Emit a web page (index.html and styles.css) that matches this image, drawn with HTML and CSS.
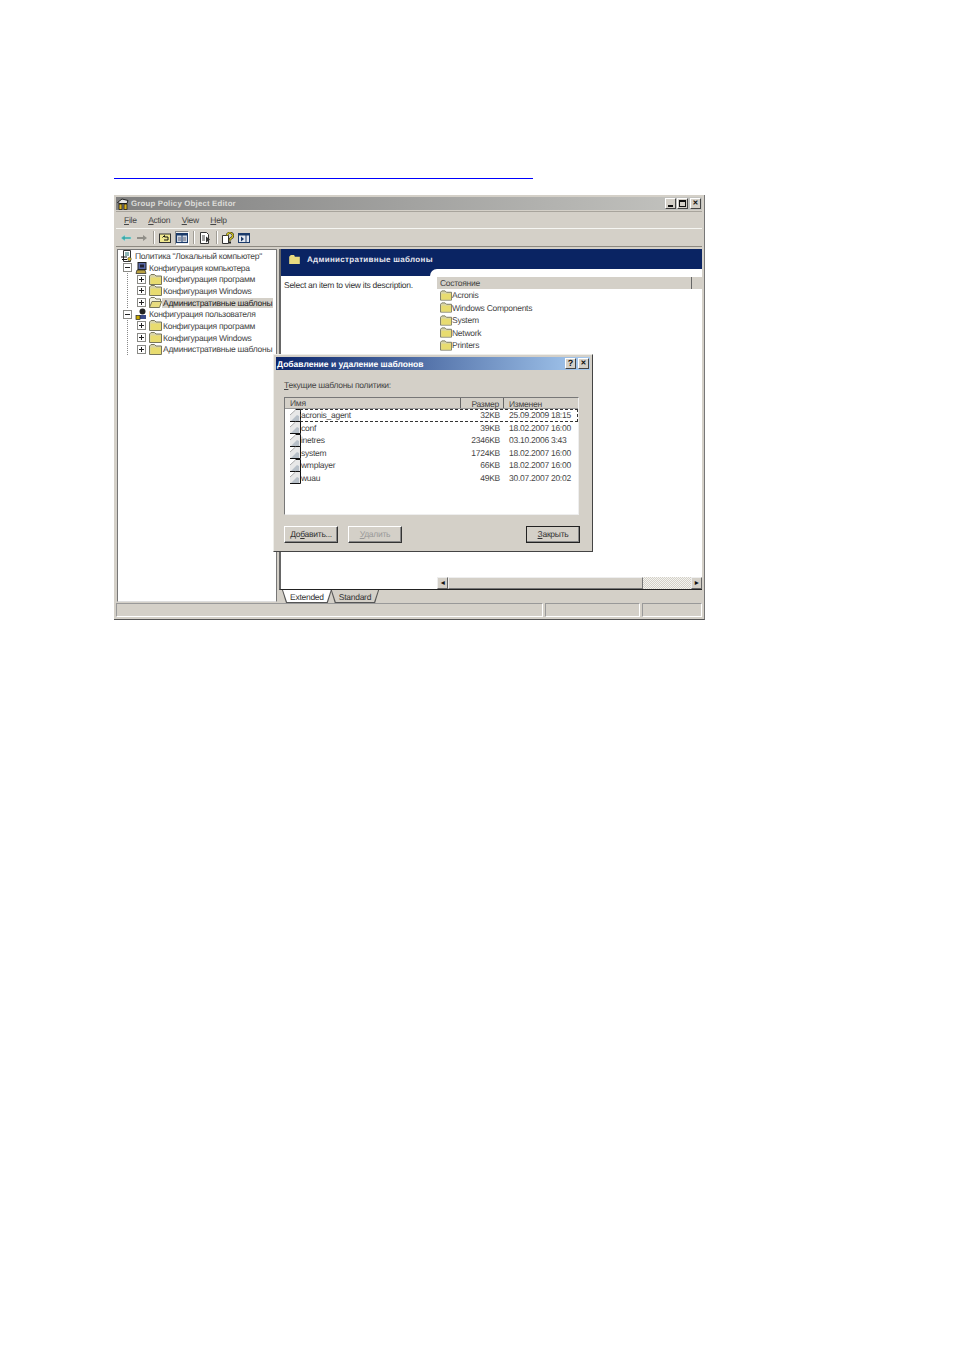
FILE: index.html
```html
<!DOCTYPE html>
<html lang="ru">
<head>
<meta charset="utf-8">
<title>Group Policy Object Editor</title>
<link rel="stylesheet" href="styles.css">
</head>
<body>
<svg class="defs" width="0" height="0" aria-hidden="true">
  <defs>
    <symbol id="folder" viewBox="0 0 13 11">
      <path d="M.5 10.500V2L2 .5h3.500L7 2h5.500v8.500z" fill="#d8d4a8" stroke="#77765c"/>
      <path d="M1.500 3.500h10.500v6.500H1.500z" fill="#e8dc70"/>
    </symbol>
    <symbol id="folder-open" viewBox="0 0 13 11">
      <path d="M.5 10.500V2L2 .5h3.500L7 2h4.500v2" fill="#f2f0dc" stroke="#77765c"/>
      <path d="M.5 10.500L3 4.500h9.500l-2 6z" fill="#e8dc80" stroke="#77765c"/>
    </symbol>
    <symbol id="plus" viewBox="0 0 9 9">
      <rect x=".5" y=".5" width="8" height="8" fill="#fff" stroke="#8a8a86"/>
      <path d="M2 4.500h5M4.500 2v5" stroke="#222"/>
    </symbol>
    <symbol id="minus" viewBox="0 0 9 9">
      <rect x=".5" y=".5" width="8" height="8" fill="#fff" stroke="#8a8a86"/>
      <path d="M2 4.500h5" stroke="#222"/>
    </symbol>
    <symbol id="doc" viewBox="0 0 11 13">
      <path d="M0 13V6L5.500 1H10v12z" fill="#e8e8e8"/>
      <path d="M1 12l6-6 2 1v5z" fill="#b8c0c8"/>
      <path d="M5.500.5h5v12H0" fill="none" stroke="#111"/>
      <path d="M0 6l5.500-5" stroke="#aaa" fill="none"/>
    </symbol>
  </defs>
</svg>

<a class="link-line" href="#" aria-label="link"></a>

<div class="window">
  <div class="titlebar">
    <svg class="app-icon" viewBox="0 0 12 12"><path d="M.5 4.500L5 1l6 1.500-1 3H3z" fill="#e8e8e8" stroke="#222"/><rect x="2" y="6" width="3" height="5.500" fill="#d8b020" stroke="#111" stroke-width=".7"/><rect x="7" y="6" width="3" height="5.500" fill="#d8b020" stroke="#111" stroke-width=".7"/></svg>
    <span class="title-text">Group Policy Object Editor</span>
    <div class="win-btns">
      <span class="win-btn"><i class="g-min"></i></span>
      <span class="win-btn"><i class="g-max"></i></span>
      <span class="win-btn g-x">✕</span>
    </div>
  </div>

  <div class="menubar">
    <span><u>F</u>ile</span><span><u>A</u>ction</span><span><u>V</u>iew</span><span><u>H</u>elp</span>
  </div>

  <div class="toolbar">
    <svg class="tb" viewBox="0 0 12 12"><path d="M1 6l4-3V5h6v2H5v2z" fill="#3aa8a8" stroke="#a8e0e0" stroke-width=".5"/></svg>
    <svg class="tb" viewBox="0 0 12 12"><path d="M11 6L7 3v2H1v2h6v2z" fill="#908e88"/></svg>
    <i class="tb-sep"></i>
    <svg class="tb" viewBox="0 0 12 12"><rect x=".5" y="2" width="11" height="8.500" fill="#f0e890" stroke="#333"/><path d="M3.500 5.500L5.500 3.500V5H9v3H5" fill="none" stroke="#111"/></svg>
    <span class="tb-on"><svg class="tb" viewBox="0 0 12 12"><rect x=".5" y="1.500" width="11" height="9" fill="#cdd6e4" stroke="#1a3a6a"/><rect x="1" y="2" width="10" height="1.500" fill="#1a3a6a"/><path d="M6 3v7" stroke="#1a3a6a"/><path d="M2 6h3M7 6h3M2 8h3M7 8h3" stroke="#667"/></svg></span>
    <i class="tb-sep"></i>
    <svg class="tb" viewBox="0 0 12 12"><path d="M1.500.5h6l2 2v9h-8z" fill="#fff" stroke="#333"/><path d="M3 4h3M3 6h3M3 8h3" stroke="#444"/><path d="M7 4.500l4 3-4 3z" fill="#333"/></svg>
    <i class="tb-sep"></i>
    <svg class="tb" viewBox="0 0 12 12"><path d="M.5 3.500h6v8h-6z" fill="#fff" stroke="#333"/><path d="M5 3.500a3 2.800 0 1 1 4.500 2.500L8 7v1.500" fill="none" stroke="#111" stroke-width="2.200"/><path d="M5 3.500a3 2.800 0 1 1 4.500 2.500L8 7v1.500" fill="none" stroke="#e8d820" stroke-width="1.200"/><rect x="7" y="9.500" width="2" height="2" fill="#222"/></svg>
    <svg class="tb" viewBox="0 0 12 12"><rect x=".5" y="1.500" width="11" height="9" fill="#e4e8f0" stroke="#1a3a6a"/><rect x="1" y="2" width="10" height="1.500" fill="#1a3a6a"/><path d="M8 3v7" stroke="#1a3a6a"/><path d="M3 4.500l3 2.500-3 2.500z" fill="#1a3a6a"/></svg>
  </div>

  <div class="panes">
    <div class="tree">
      <div class="node n0"><svg class="ni" viewBox="0 0 12 12"><path d="M2.500.5h7v11h-7z" fill="#fff" stroke="#333"/><path d="M4 3h4M4 5h4" stroke="#1a6a6a"/><path d="M0 7h6M1 9.500h5" stroke="#111"/><circle cx="8.500" cy="9" r="1.800" fill="#d8b820" stroke="#333" stroke-width=".5"/></svg><span>Политика "Локальный компьютер"</span></div>
      <div class="node n1"><svg class="box"><use href="#minus"/></svg><svg class="ni" viewBox="0 0 12 12"><rect x="3" y=".5" width="8" height="7" fill="#5868a8" stroke="#222"/><rect x="5" y="2.500" width="4" height="3" fill="#223"/><path d="M1 11.500l1-3.500h8l1 3.500z" fill="#b8a040" stroke="#222" stroke-width=".7"/></svg><span>Конфигурация компьютера</span></div>
      <div class="node n2"><svg class="box"><use href="#plus"/></svg><svg class="fi"><use href="#folder"/></svg><span>Конфигурация программ</span></div>
      <div class="node n2"><svg class="box"><use href="#plus"/></svg><svg class="fi"><use href="#folder"/></svg><span>Конфигурация Windows</span></div>
      <div class="node n2"><svg class="box"><use href="#plus"/></svg><svg class="fi"><use href="#folder-open"/></svg><span class="sel">Административные шаблоны</span></div>
      <div class="node n1"><svg class="box"><use href="#minus"/></svg><svg class="ni" viewBox="0 0 12 12"><circle cx="7.500" cy="3.500" r="3" fill="#222"/><path d="M3 11l2-4h6v4z" fill="#3a4a8a"/><rect x="1" y="7.500" width="4" height="4" fill="#c8a800" stroke="#222" stroke-width=".7"/></svg><span>Конфигурация пользователя</span></div>
      <div class="node n2"><svg class="box"><use href="#plus"/></svg><svg class="fi"><use href="#folder"/></svg><span>Конфигурация программ</span></div>
      <div class="node n2"><svg class="box"><use href="#plus"/></svg><svg class="fi"><use href="#folder"/></svg><span>Конфигурация Windows</span></div>
      <div class="node n2"><svg class="box"><use href="#plus"/></svg><svg class="fi"><use href="#folder"/></svg><span>Административные шаблоны</span></div>
    </div>

    <div class="right">
      <div class="details">
        <div class="banner">
          <svg class="fi" viewBox="0 0 13 11"><path d="M0 11V2l2-2h4l1 2h6v9z" fill="#e8da80"/></svg>
          <span>Административные шаблоны</span>
        </div>
        <div class="detail-body">
          <div class="desc">Select an item to view its description.</div>
          <div class="notch"></div>
          <div class="list-side">
            <div class="col-head"><span class="col-name">Состояние</span><span class="col-rest"></span></div>
            <div class="f-row"><svg class="fi"><use href="#folder"/></svg>Acronis</div>
            <div class="f-row"><svg class="fi"><use href="#folder"/></svg>Windows Components</div>
            <div class="f-row"><svg class="fi"><use href="#folder"/></svg>System</div>
            <div class="f-row"><svg class="fi"><use href="#folder"/></svg>Network</div>
            <div class="f-row"><svg class="fi"><use href="#folder"/></svg>Printers</div>
            <div class="hscroll">
              <span class="sb-btn">◂</span><span class="sb-thumb"></span><span class="sb-track"></span><span class="sb-btn">▸</span>
            </div>
          </div>
        </div>
      </div>
      <div class="tabs">
        <span class="tab active">Extended</span>
        <span class="tab">Standard</span>
      </div>
    </div>
  </div>

  <div class="status"><span class="s1"></span><span class="s2"></span><span class="s3"></span></div>

  <div class="dialog">
    <div class="dlg-title">
      <span>Добавление и удаление шаблонов</span>
      <div class="win-btns"><span class="win-btn g-q">?</span><span class="win-btn g-x">✕</span></div>
    </div>
    <div class="dlg-body">
      <div class="dlg-label"><u>Т</u>екущие шаблоны политики:</div>
      <div class="dlg-list">
        <div class="dl-head"><span class="c-name">Имя</span><span class="c-size">Размер</span><span class="c-date">Изменен</span></div>
        <div class="dl-row focus"><span class="c-name"><svg class="di"><use href="#doc"/></svg>acronis_agent</span><span class="c-size">32KB</span><span class="c-date">25.09.2009 18:15</span></div>
        <div class="dl-row"><span class="c-name"><svg class="di"><use href="#doc"/></svg>conf</span><span class="c-size">39KB</span><span class="c-date">18.02.2007 16:00</span></div>
        <div class="dl-row"><span class="c-name"><svg class="di"><use href="#doc"/></svg>inetres</span><span class="c-size">2346KB</span><span class="c-date">03.10.2006 3:43</span></div>
        <div class="dl-row"><span class="c-name"><svg class="di"><use href="#doc"/></svg>system</span><span class="c-size">1724KB</span><span class="c-date">18.02.2007 16:00</span></div>
        <div class="dl-row"><span class="c-name"><svg class="di"><use href="#doc"/></svg>wmplayer</span><span class="c-size">66KB</span><span class="c-date">18.02.2007 16:00</span></div>
        <div class="dl-row"><span class="c-name"><svg class="di"><use href="#doc"/></svg>wuau</span><span class="c-size">49KB</span><span class="c-date">30.07.2007 20:02</span></div>
      </div>
      <div class="dlg-btns">
        <span class="btn">До<u>б</u>авить...</span>
        <span class="btn disabled"><u>У</u>далить</span>
        <span class="btn close"><u>З</u>акрыть</span>
      </div>
    </div>
  </div>
</div>
</body>
</html>
```
FILE: styles.css
```css
* { box-sizing: border-box; }
html, body { margin: 0; background: #fff; }
body {
  height: 1350px;
  padding: 178px 0 0 114px;
  font-family: "Liberation Sans", Arial, sans-serif;
  font-size: 8.500px;
  letter-spacing: -.27px;
  text-rendering: geometricPrecision;
  color: #333;
  overflow: hidden;
}
.defs { position: absolute; }
u { text-decoration: underline; }

.link-line { display: block; width: 419px; height: 1px; background: #0000ff; margin-bottom: 16px; }

.window {
  position: relative;
  width: 591px;
  height: 425px;
  background: #d4d0c8;
  border-right: 1px solid #777;
  border-bottom: 1px solid #555;
  padding: 2px 2px 1px 2px;
  display: flex;
  flex-direction: column;
}
.titlebar {
  height: 13px;
  background: linear-gradient(90deg, #808080, #c4c4c0);
  display: flex;
  align-items: center;
  color: #dcdcd8;
  font-weight: bold;
  font-size: 7.800px;
  letter-spacing: .2px;
  padding-left: 1px;
}
.app-icon { width: 12px; height: 12px; margin-right: 2px; }
.title-text { flex: 1; }
.win-btns { display: flex; gap: 1px; margin-right: 1px; }
.win-btns .win-btn:last-child { margin-left: 1px; }
.win-btn {
  width: 11px;
  height: 11px;
  background: #d4d0c8;
  border: 1px solid;
  border-color: #fff #444 #444 #fff;
  display: flex;
  align-items: center;
  justify-content: center;
  color: #111;
  font-size: 7px;
  line-height: 1;
}
.g-min { display: block; width: 5px; height: 2px; background: #111; margin-top: 5px; margin-right: 1px; }
.g-max { display: block; width: 7px; height: 7px; border: 1px solid #111; border-top-width: 2px; }
.g-q { font-weight: bold; font-size: 9px; }

.menubar {
  height: 18px;
  margin-top: 1px;
  padding: 1px 0 0 8px;
  display: flex;
  align-items: center;
  gap: 11.500px;
  border-bottom: 1px solid #f6f6f2;
  box-shadow: 0 1px 0 #a8a49c inset;
  color: #444;
}
.toolbar {
  height: 18px;
  display: flex;
  align-items: center;
  padding-left: 4px;
  gap: 4px;
  border-bottom: 1px solid #8c8880;
}
.tb { width: 12px; height: 12px; flex: none; display: block; }
.tb-sep { width: 1px; height: 13px; background: #a09c94; box-shadow: 1px 0 0 #fff; margin: 0 1px; }
.tb-on { background: #eee; border: 1px solid; border-color: #888 #fff #fff #888; margin-right: -1px; }

.panes {
  display: flex;
  height: 353px;
  margin-top: 2px;
  gap: 2px;
}
.tree {
  width: 160px;
  margin-left: 1px;
  background: #fff;
  border: 1px solid #777;
  border-bottom-color: #ddd;
  padding: 0 0 0 3px;
}
.node {
  height: 11.700px;
  display: flex;
  align-items: center;
  white-space: nowrap;
  color: #444;
}
.n1 { padding-left: 2px; }
.n2 {
  padding-left: 16px;
  background: linear-gradient(#888 50%, transparent 0) 6px 0 / 1px 2px repeat-y;
}
.box { width: 9px; height: 9px; margin-right: 3px; flex: none; }
.ni { width: 12px; height: 12px; margin-right: 2px; flex: none; }
.fi { width: 13px; height: 11px; margin-right: 1px; flex: none; }
.sel { background: #d4d0c8; color: #222; padding: 0 1px; margin-left: -1px; }

.right { flex: 1; display: flex; flex-direction: column; min-width: 0; }
.details {
  flex: 1;
  background: #fff;
  border-left: 2px solid #666;
  border-bottom: 1px solid #222;
  display: flex;
  flex-direction: column;
  min-height: 0;
}
.banner {
  height: 20px;
  background: #0a2463;
  color: #e8e8f0;
  display: flex;
  align-items: center;
  padding-left: 8px;
  font-weight: bold;
  font-size: 8px;
  letter-spacing: .3px;
  flex: none;
}
.banner .fi { width: 11px; height: 9px; margin-right: 7px; }
.detail-body { flex: 1; display: flex; min-height: 0; }
.desc {
  width: 149px;
  flex: none;
  border-top: 7px solid #0a2463;
  padding: 4px 0 0 3px;
  color: #333;
  white-space: nowrap;
}
.notch { width: 7px; height: 7px; flex: none; background: #0a2463; position: relative; }
.notch::after { content: ""; position: absolute; inset: 0; background: #fff; border-top-left-radius: 7px; }
.list-side { flex: 1; display: flex; flex-direction: column; padding-top: 8px; min-width: 0; }
.col-head { height: 12px; display: flex; flex: none; background: #d4d0c8; color: #444; line-height: 12px; }
.col-name { width: 255px; padding-left: 3px; border-right: 1px solid #666; }
.col-rest { flex: 1; }
.f-row { height: 12.500px; display: flex; align-items: center; padding-left: 3px; white-space: nowrap; color: #444; flex: none; }
.f-row .fi { margin-right: 0; width: 12px; }
.hscroll { margin-top: auto; height: 12px; display: flex; flex: none; }
.sb-btn {
  width: 11px;
  background: #d4d0c8;
  border: 1px solid;
  border-color: #eee #666 #666 #eee;
  display: flex;
  align-items: center;
  justify-content: center;
  font-size: 8px;
  line-height: 1;
  color: #111;
}
.sb-thumb { width: 195px; background: #d4d0c8; border: 1px solid; border-color: #eee #777 #777 #eee; }
.sb-track { flex: 1; background: repeating-conic-gradient(#d4d0c8 0 25%, #f4f4f0 0 50%) 0 0 / 2px 2px; }

.tabs { height: 12px; display: flex; flex: none; padding-left: 3px; }
.tab {
  height: 13px;
  padding: 0 8px;
  line-height: 14px;
  color: #333;
  clip-path: polygon(0 0, 100% 0, calc(100% - 4px) 100%, 4px 100%);
  background: #555;
  position: relative;
  z-index: 0;
}
.tab::before {
  content: "";
  position: absolute;
  inset: 0 1px 1px 1px;
  clip-path: polygon(0 0, 100% 0, calc(100% - 4px) 100%, 4px 100%);
  background: #d4d0c8;
  z-index: -1;
}
.tab.active::before { background: #fff; }
.tab + .tab { margin-left: -1px; }

.status { height: 15px; display: flex; gap: 2px; flex: none; margin-top: 1px; }
.status span { border: 1px solid; border-color: #999 #fff #fff #999; height: 14px; }
.s1 { width: 427px; }
.s2 { width: 95px; }
.s3 { flex: 1; }

.dialog {
  position: absolute;
  left: 159px;
  top: 159px;
  width: 320px;
  height: 198px;
  background: #d4d0c8;
  border: 1px solid;
  border-color: #eeeeea #444 #444 #eeeeea;
  padding: 2px;
  display: flex;
  flex-direction: column;
}
.dlg-title {
  height: 13px;
  background: linear-gradient(90deg, #0a246a, #a6caf0);
  color: #fff;
  font-weight: bold;
  font-size: 8.500px;
  letter-spacing: 0;
  display: flex;
  align-items: center;
  justify-content: space-between;
  padding-left: 1px;
  flex: none;
}
.dlg-body { flex: 1; display: flex; flex-direction: column; padding: 0 9px 0 8px; }
.dlg-label { margin-top: 9px; height: 12px; line-height: 12px; color: #444; }
.dlg-list {
  margin-top: 6px;
  width: 295px;
  height: 118px;
  background: #fff;
  border: 1px solid;
  border-color: #777 #eee #eee #777;
  flex: none;
}
.dl-head { display: flex; height: 11px; background: #d4d0c8; line-height: 12px; color: #444; border-bottom: 1px solid #999; }
.dl-head .c-name, .dl-head .c-size { border-right: 1px solid #666; }
.c-name { width: 176px; padding-left: 5px; display: flex; align-items: center; flex: none; }
.c-size { width: 43px; text-align: right; padding-right: 4px; flex: none; }
.c-date { flex: 1; padding-left: 5px; white-space: nowrap; }
.dl-row { display: flex; height: 12.500px; line-height: 12.500px; color: #444; white-space: nowrap; position: relative; }
.dl-row.focus::after { content: ""; position: absolute; left: 15px; right: 0; top: 0; bottom: 0; border: 1px dashed #333; }
.di { width: 11px; height: 13px; flex: none; }
.dlg-btns { display: flex; gap: 10px; margin-top: 11px; }
.btn {
  width: 54px;
  height: 17px;
  background: #d4d0c8;
  border: 1px solid;
  border-color: #fff #333 #333 #fff;
  box-shadow: inset -1px -1px 0 #888;
  text-align: center;
  line-height: 15px;
  color: #333;
}
.btn.disabled { color: #999; }
.btn.close { margin-left: auto; border-color: #222; margin-right: 1px; }
```
